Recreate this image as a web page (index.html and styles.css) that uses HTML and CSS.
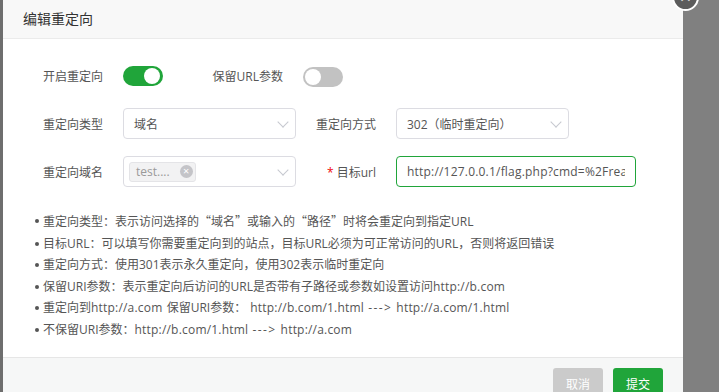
FILE: index.html
```html
<!DOCTYPE html>
<html lang="zh">
<head>
<meta charset="utf-8">
<title>编辑重定向</title>
<link rel="stylesheet" href="styles.css">
</head>
<body>
<div class="screen">
  <div class="edge-left"></div>
  <div class="modal">
    <div class="modal-header">编辑重定向</div>
    <span class="close-btn">×</span>
    <div class="modal-body">
      <div class="form-row">
        <label class="label">开启重定向</label>
        <div class="switch-cell"><span class="switch on"><span class="knob"></span></span></div>
        <label class="label">保留URL参数</label>
        <div class="switch-cell"><span class="switch off"><span class="knob"></span></span></div>
      </div>
      <div class="form-row">
        <label class="label">重定向类型</label>
        <div class="select"><span class="value">域名</span><span class="chev"></span></div>
        <label class="label">重定向方式</label>
        <div class="select"><span class="value">302（临时重定向）</span><span class="chev"></span></div>
      </div>
      <div class="form-row">
        <label class="label">重定向域名</label>
        <div class="select">
          <span class="tag">test....<span class="tag-x">×</span></span>
          <span class="chev"></span>
        </div>
        <label class="label"><span class="req">*</span> 目标url</label>
        <div class="input active"><span class="value">http://127.0.0.1/flag.php?cmd=%2Fread</span></div>
      </div>
      <ul class="tips">
        <li>重定向类型：表示访问选择的<span class="q">“域名”</span>或输入的<span class="q">“路径”</span>时将会重定向到指定URL</li>
        <li>目标URL：可以填写你需要重定向到的站点，目标URL必须为可正常访问的URL，否则将返回错误</li>
        <li>重定向方式：使用301表示永久重定向，使用302表示临时重定向</li>
        <li>保留URI参数：表示重定向后访问的URL是否带有子路径或参数如设置访问<span class="url">http://b.com</span></li>
        <li>重定向到<span class="url">http://a.com</span> 保留URI参数： <span class="url">http://b.com/1.html</span> <span class="arrow">---&gt;</span> <span class="url">http://a.com/1.html</span></li>
        <li>不保留URI参数：<span class="url">http://b.com/1.html</span> <span class="arrow">---&gt;</span> <span class="url">http://a.com</span></li>
      </ul>
    </div>
    <div class="modal-footer">
      <button class="btn btn-cancel">取消</button>
      <button class="btn btn-submit">提交</button>
    </div>
  </div>
  <div class="edge-right"></div>
</div>
</body>
</html>
```
FILE: styles.css
```css
* { box-sizing: border-box; }
html, body { margin: 0; padding: 0; }
body {
  width: 719px;
  height: 392px;
  overflow: hidden;
  background: #808080;
  font-family: "Open Sans", "Noto Sans CJK SC", sans-serif;
  font-size: 12px;
  color: #555;
}
.screen {
  display: flex;
  height: 392px;
}
.edge-left {
  width: 3px;
  flex: none;
  background: #6e6e6e;
}
.edge-right {
  flex: 1;
  background: #808080;
}
.modal {
  position: relative;
  width: 680px;
  flex: none;
  background: #fff;
  display: flex;
  flex-direction: column;
}
.modal-header {
  height: 39px;
  flex: none;
  background: #f8f8f8;
  border-bottom: 1px solid #ebebeb;
  padding-left: 20px;
  font-family: "Noto Sans CJK SC", sans-serif;
  font-size: 14px;
  line-height: 37px;
  color: #333;
}
.close-btn {
  position: absolute;
  left: 669px;
  top: -16px;
  width: 27px;
  height: 27px;
  border-radius: 50%;
  background: #5c5c5c;
  border: 2px solid #fff;
  color: #ddd;
  font-size: 20px;
  line-height: 21px;
  text-align: center;
  z-index: 2;
}
.modal-body {
  height: 318px;
  flex: none;
  padding: 21px 20px 0 20px;
}
.form-row {
  display: flex;
  align-items: center;
  height: 31px;
  margin-bottom: 17px;
}
.label {
  width: 100px;
  flex: none;
  text-align: right;
  padding-right: 20px;
  color: #555;
  white-space: nowrap;
}
.req { color: #ef0808; }
.switch-cell {
  width: 80px;
  flex: none;
  display: flex;
  align-items: center;
}
.switch {
  position: relative;
  display: block;
  width: 40px;
  height: 20px;
  border-radius: 10px;
}
.switch.on { background: #20a53a; }
.switch.off { background: #c2c2c2; margin-top: 2px; }
.knob {
  position: absolute;
  top: 2px;
  width: 16px;
  height: 16px;
  border-radius: 50%;
  background: #fff;
}
.switch.on .knob { right: 3px; }
.switch.off .knob { left: 2px; }
.select, .input {
  position: relative;
  flex: none;
  width: 173px;
  height: 31px;
  border: 1px solid #dcdce2;
  border-radius: 4px;
  display: flex;
  align-items: center;
  padding-left: 10px;
  color: #555;
  overflow: hidden;
  white-space: nowrap;
}
.input {
  width: 240px;
  padding-right: 10px;
  letter-spacing: 0.2px;
}
.input.active { border-color: #20a53a; }
.input .value { overflow: hidden; }
.chev {
  position: absolute;
  right: 8px;
  top: 9px;
  width: 8px;
  height: 8px;
  border-right: 1px solid #c6c8cf;
  border-bottom: 1px solid #c6c8cf;
  transform: rotate(45deg);
}
.tag {
  display: flex;
  align-items: center;
  margin-left: -5px;
  height: 20px;
  padding: 0 2px 0 6px;
  background: #f2f2f3;
  border: 1px solid #e4e4e7;
  border-radius: 3px;
  color: #9a9a9a;
}
.tag-x {
  margin-left: 10px;
  width: 13px;
  height: 13px;
  border-radius: 50%;
  background: #c4c4c8;
  color: #fff;
  font-size: 11px;
  line-height: 12px;
  text-align: center;
}
.tips {
  list-style: none;
  margin: 23px 0 0 0;
  padding: 0 0 0 20px;
  color: #555;
  word-spacing: 1px;
}
.tips li {
  position: relative;
  line-height: 21.6px;
  white-space: nowrap;
}
.tips li::before {
  content: "";
  position: absolute;
  left: -8px;
  top: 9px;
  width: 4px;
  height: 4px;
  border-radius: 50%;
  background: #555;
}
.q { font-family: "Noto Sans CJK SC", sans-serif; }
.url { letter-spacing: 0.2px; }
.arrow { letter-spacing: 1.4px; }
.modal-footer {
  flex: none;
  border-top: 1px solid #e6e6e6;
  background: #f6f7f7;
  display: flex;
  justify-content: flex-end;
  gap: 10px;
  padding: 10px 20px 10px 0;
}
.btn {
  width: 50px;
  height: 30px;
  border: 0;
  border-radius: 3px;
  color: #fff;
  font-family: "Noto Sans CJK SC", sans-serif;
  font-size: 12px;
  padding: 0;
}
.btn-cancel { background: #cbcbcb; }
.btn-submit { background: #20a53a; }
```
